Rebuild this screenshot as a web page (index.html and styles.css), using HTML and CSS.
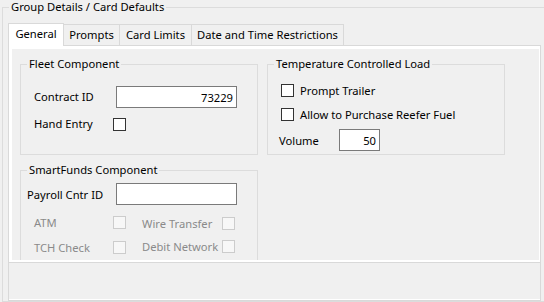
FILE: index.html
```html
<!DOCTYPE html>
<html lang="en">
<head>
    <meta charset="UTF-8">
    <meta name="viewport" content="width=device-width, initial-scale=1.0">
    <title>Group Details / Card Defaults</title>
    <link rel="stylesheet" href="styles.css">
</head>
<body>
    <fieldset class="outer">
        <legend>Group Details / Card Defaults</legend>

        <div class="tabs">
            <div class="tab-strip">
                <div class="tab active tab-general">General</div>
                <div class="tab tab-prompts">Prompts</div>
                <div class="tab tab-limits">Card Limits</div>
                <div class="tab tab-dates">Date and Time Restrictions</div>
            </div>

            <div class="page">
                <div class="page-inner">
                    <div class="top-groups">
                        <fieldset class="group">
                            <legend>Fleet Component</legend>
                            <div class="fleet-body">
                                <label>Contract ID</label>
                                <input type="text" class="text contract" value="73229">
                                <label>Hand Entry</label>
                                <input type="checkbox" class="check">
                            </div>
                        </fieldset>

                        <fieldset class="group">
                            <legend>Temperature Controlled Load</legend>
                            <div class="temp-body">
                                <div class="opt">
                                    <input type="checkbox" class="check">
                                    <label>Prompt Trailer</label>
                                </div>
                                <div class="opt second">
                                    <input type="checkbox" class="check">
                                    <label>Allow to Purchase Reefer Fuel</label>
                                </div>
                                <div class="volume">
                                    <label>Volume</label>
                                    <input type="text" class="text small" value="50">
                                </div>
                            </div>
                        </fieldset>
                    </div>

                    <fieldset class="group funds">
                        <legend>SmartFunds Component</legend>
                        <div class="funds-body">
                            <div class="payroll">
                                <label>Payroll Cntr ID</label>
                                <input type="text" class="text contract" value="">
                            </div>
                            <div class="checks">
                                <div class="stack left">
                                    <div class="opt disabled">
                                        <label>ATM</label>
                                        <input type="checkbox" class="check" disabled>
                                    </div>
                                    <div class="opt disabled">
                                        <label>TCH Check</label>
                                        <input type="checkbox" class="check" disabled>
                                    </div>
                                </div>
                                <div class="stack right">
                                    <div class="opt disabled">
                                        <label>Wire Transfer</label>
                                        <input type="checkbox" class="check" disabled>
                                    </div>
                                    <div class="opt disabled">
                                        <label>Debit Network</label>
                                        <input type="checkbox" class="check" disabled>
                                    </div>
                                </div>
                            </div>
                        </div>
                    </fieldset>
                </div>
            </div>

            <div class="footer"></div>
        </div>
    </fieldset>
</body>
</html>
```

FILE: styles.css
```css
body {
    margin: 0;
    background-color: #f0f0f0;
    font-family: "Noto Sans", "Open Sans", sans-serif;
    font-size: 11.2px;
    color: #000;
    overflow: hidden;
    width: 544px;
    height: 302px;
}

fieldset {
    margin: 0;
    padding: 0;
    min-width: 0;
}

legend {
    padding: 0 2px;
    margin-left: 6px;
    line-height: 14px;
}

.outer {
    width: 560px;
    margin-left: 2px;
    border: 1px solid #dcdcdc;
}

.tabs {
    width: 533px;
    margin: 9px 0 0 5px;
}

.tab-strip {
    display: flex;
    align-items: flex-end;
    height: 22px;
}

.tab {
    box-sizing: border-box;
    height: 21px;
    border: 1px solid #d9d9d9;
    border-bottom: none;
    margin-left: -1px;
    text-align: center;
    white-space: nowrap;
    line-height: 19px;
    background-color: #f0f0f0;
}

.tab.active {
    position: relative;
    z-index: 1;
    height: 23px;
    margin-left: 0;
    margin-bottom: -1px;
    line-height: 20px;
    background-color: #fff;
}

.tab-general { width: 56px; }
.tab-prompts { width: 57px; }
.tab-limits { width: 73px; }
.tab-dates { width: 153px; }

.page {
    border: 1px solid #d9d9d9;
    background-color: #fff;
    padding: 3px 1px 2px 3px;
}

.page-inner {
    height: 211px;
    overflow: hidden;
    background-color: #f0f0f0;
}

.top-groups {
    display: flex;
    gap: 9px;
    margin: 8px 0 0 8px;
}

.group {
    width: 238px;
    box-sizing: border-box;
    border: 1px solid #dcdcdc;
}

.fleet-body {
    display: grid;
    grid-template-columns: 79px 124px;
    grid-template-rows: 22px 15px;
    row-gap: 9px;
    align-items: center;
    padding: 15px 0 0 13px;
}

.fleet-body label,
.opt label,
.volume label,
.payroll label {
    line-height: 15px;
    white-space: nowrap;
}

.fleet-body label {
    margin-top: -2px;
}

.text {
    box-sizing: border-box;
    height: 22px;
    border: 1px solid #7a7a7a;
    background-color: #fff;
    font: inherit;
    text-align: right;
    padding: 0 3px 0 2px;
    margin: 0;
    outline: none;
}

.contract {
    width: 121px;
    justify-self: end;
}

.small {
    width: 41px;
}

.check {
    appearance: none;
    -webkit-appearance: none;
    box-sizing: border-box;
    width: 13px;
    height: 13px;
    margin: 0;
    border: 1px solid #333;
    background-color: #fff;
}

.check:disabled {
    border-color: #cccccc;
    background-color: #f7f7f7;
}

.temp-body {
    padding: 13px 0 3px 13px;
}

.opt {
    display: flex;
    align-items: center;
    height: 13px;
}

.temp-body .opt {
    gap: 6px;
}

.opt.second {
    margin-top: 11px;
}

.volume {
    display: flex;
    align-items: center;
    margin: 8px 0 0 -2px;
}

.volume label {
    width: 60px;
}

.funds {
    margin: 8px 0 0 8px;
    padding-bottom: 12px;
}

.funds-body {
    padding: 6px 0 0 6px;
}

.payroll {
    display: flex;
    align-items: center;
}

.payroll label {
    width: 89px;
}

.checks {
    display: flex;
    align-items: flex-start;
}

.stack .opt + .opt {
    margin-top: 12px;
}

.stack.left {
    margin: 11px 0 0 7px;
}

.stack.left label {
    width: 79px;
}

.stack.right {
    margin: 12px 0 0 16px;
}

.stack.right .opt + .opt {
    margin-top: 10px;
}

.stack.right label {
    width: 80px;
}

.opt.disabled label {
    color: #8a8a8a;
}

.footer {
    height: 37px;
    border: 1px solid #d9d9d9;
    border-top: none;
    box-shadow: inset 0 -1px #fff;
}
```
